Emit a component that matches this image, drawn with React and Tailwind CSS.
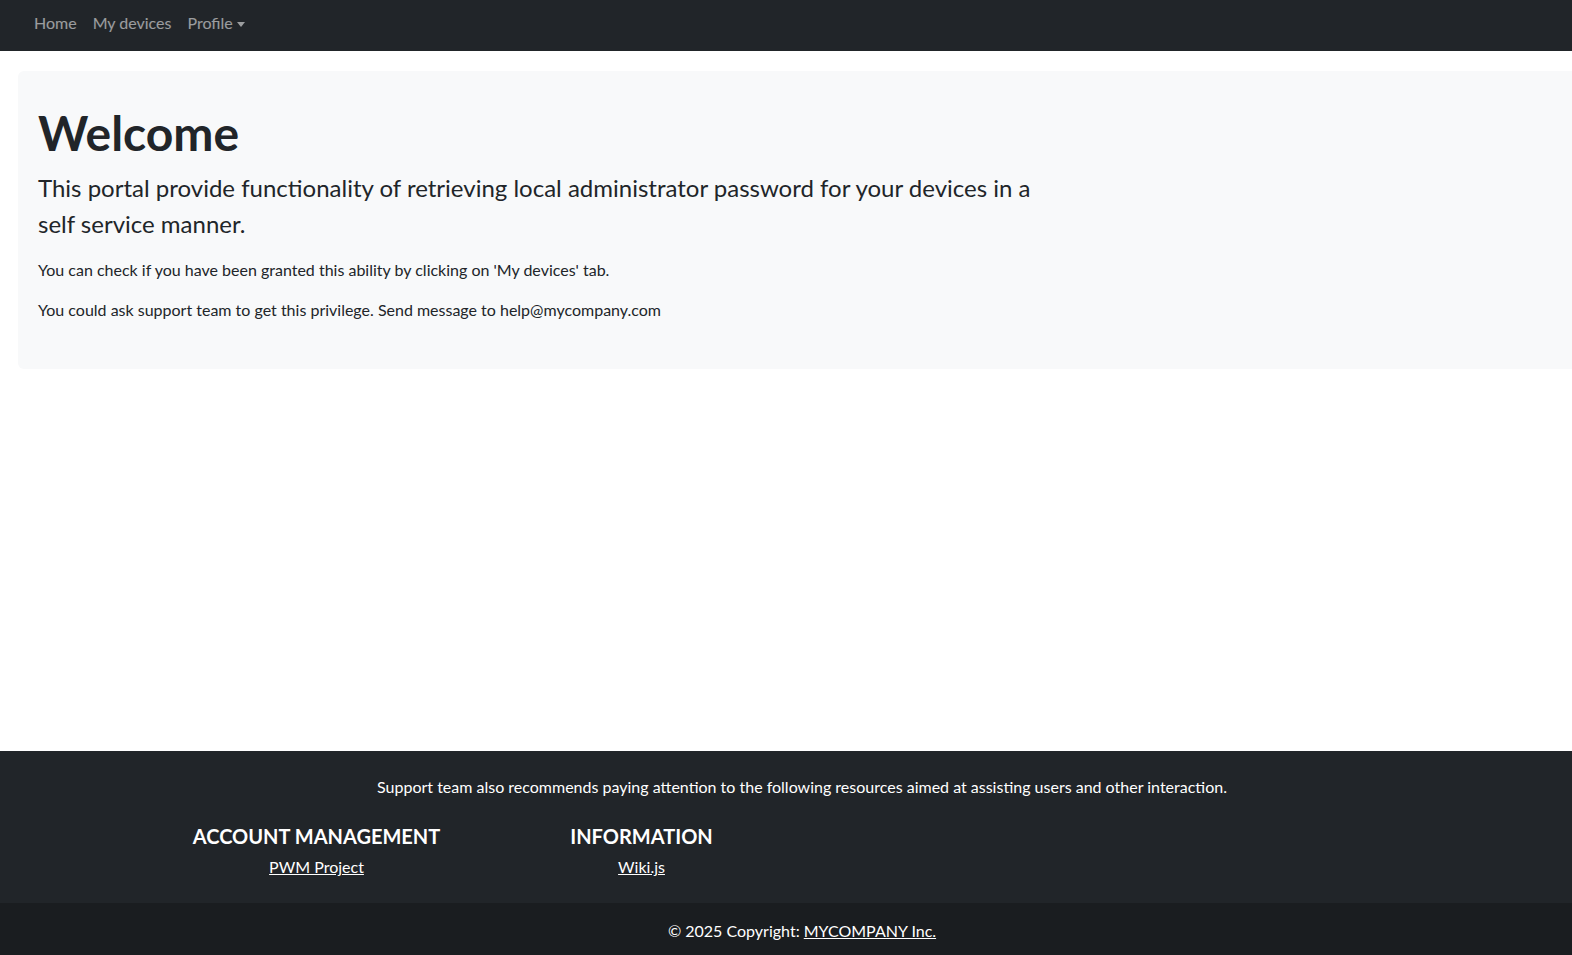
import React from 'react';

const font = { fontFamily: 'Lato, "Noto Sans", sans-serif' };

const NavBar = () => (
  <nav className="h-[51px] bg-[#212529] flex items-start pt-[11px] pl-[26px]">
    <a href="#" className="px-2 text-[16px] leading-6 text-white/55">Home</a>
    <a href="#" className="px-2 text-[16px] leading-6 text-white/55">My devices</a>
    <a href="#" className="px-2 text-[16px] leading-6 text-white/55 flex items-center">
      Profile
      <span className="ml-[4px] mt-[2px] w-0 h-0 border-l-[4px] border-r-[4px] border-t-[5px] border-l-transparent border-r-transparent border-t-white/55"></span>
    </a>
  </nav>
);

const Welcome = () => (
  <main className="h-[700px] pt-5">
    <div className="mx-[18px] bg-[#f8f9fa] rounded-md pl-5 pt-[33px] pb-[31px] text-[#212529]">
      <h1 className="text-[48px] font-bold leading-[1.2] mb-[8px]">Welcome</h1>
      <p className="text-[24px] leading-[36px] w-[1010px] mb-4">
        This portal provide functionality of retrieving local administrator password for your devices in a self service manner.
      </p>
      <p className="text-[16px] leading-6 mb-4">
        You can check if you have been granted this ability by clicking on 'My devices' tab.
      </p>
      <p className="text-[16px] leading-6 mb-4">
        You could ask support team to get this privilege. Send message to help@mycompany.com
      </p>
    </div>
  </main>
);

const Footer = () => (
  <footer className="bg-[#212529] text-white">
    <div className="pt-6 pb-[24px]">
      <p className="text-center text-[16px] leading-6 mb-[25px]">
        Support team also recommends paying attention to the following resources aimed at assisting users and other interaction.
      </p>
      <div className="flex pl-[154px]">
        {[
          ['ACCOUNT MANAGEMENT', 'PWM Project'],
          ['INFORMATION', 'Wiki.js'],
        ].map(([title, link]) => (
          <div key={title} className="w-[325px] text-center">
            <h5 className="text-[20px] font-bold leading-6 mb-[7px] uppercase">{title}</h5>
            <a href="#" className="text-[16px] leading-6 underline">{link}</a>
          </div>
        ))}
      </div>
    </div>
    <div className="bg-[#1a1d20] p-4 text-center text-[16px] leading-6">
      © 2025 Copyright: <a href="#" className="underline">MYCOMPANY Inc.</a>
    </div>
  </footer>
);

export default function App() {
  return (
    <div className="w-full overflow-hidden bg-white" style={font}>
      <div className="w-[1604px]">
        <NavBar />
        <Welcome />
        <Footer />
      </div>
    </div>
  );
}
